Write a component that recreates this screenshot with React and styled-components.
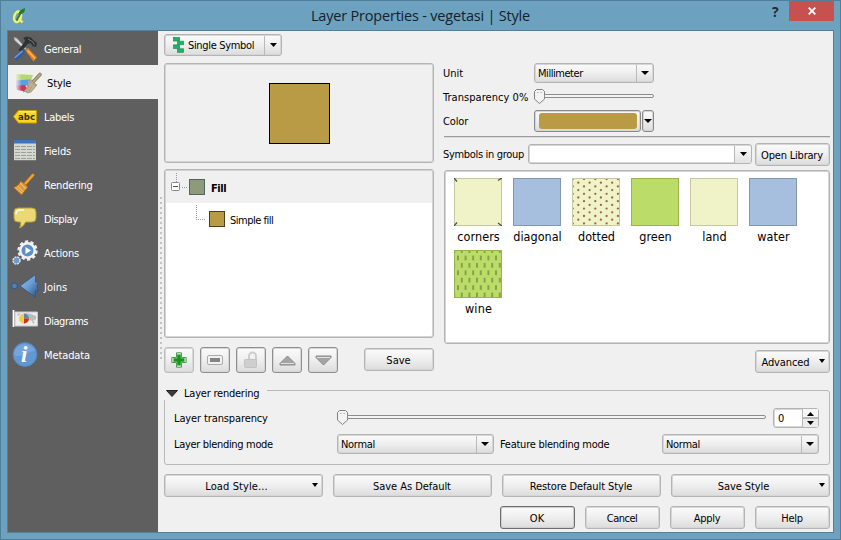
import React from "react";
import styled, { createGlobalStyle, css } from "styled-components";

const Global = createGlobalStyle`
  * { box-sizing: border-box; }
  body { margin: 0; overflow: hidden; }
  svg { display: block; flex: none; }
`;

const face = css`
  border: 1px solid #b4b4b4;
  border-radius: 3px;
  box-shadow: inset 0 0 0 1px #d6d6d6;
  background: linear-gradient(#fbfbfb, #f0f0f0 45%, #dcdcdc);
`;

const Window = styled.div`
  width: 841px;
  height: 540px;
  display: flex;
  flex-direction: column;
  background: #6ca2bf;
  border: 1px solid #4f7f99;
  padding: 0 6px 6px;
  font: 11px/14px "DejaVu Sans Condensed", "DejaVu Sans", sans-serif;
  font-stretch: condensed;
  color: #000;
`;

const TitleBar = styled.header`
  height: 29px;
  flex: none;
  display: grid;
  grid-template-columns: 60px 1fr 60px;
  align-items: center;
  padding-left: 4px;
`;

const Title = styled.h1`
  margin: 0 4px 0 0;
  text-align: center;
  font: 14.5px/20px "Open Sans", sans-serif;
  letter-spacing: -0.2px;
  color: #14212a;
`;

const WindowButtons = styled.div`
  display: flex;
  align-self: start;
  justify-content: space-between;
  margin-left: -2px;
`;

const HelpMark = styled.span`
  font: bold 14px/22px "Open Sans", sans-serif;
  color: #1e2b33;
`;

const CloseButton = styled.button`
  width: 45px;
  height: 20px;
  padding: 0;
  border: 0;
  background: #c75050;
  display: grid;
  place-items: center;
`;

const Client = styled.div`
  flex: 1;
  min-height: 0;
  display: flex;
  background: #f0f0f0;
  border: 1px solid #557f99;
`;

const Sidebar = styled.nav`
  width: 150px;
  flex: none;
  background: #5f5f5f;
`;

const NavItem = styled.div`
  height: 34px;
  display: flex;
  align-items: center;
  padding-left: 4px;
  gap: ${(p) => (p.$active ? 5 : 6)}px;
  padding-top: 1px;
  color: ${(p) => (p.$active ? "#000" : "#fff")};
  background: ${(p) => (p.$active ? "#f0f0f0" : "transparent")};
`;

const Text = styled.span`
  display: block;
  padding-top: 2px;
  white-space: nowrap;
  letter-spacing: ${(p) => p.$ls || 0}px;
  font-weight: ${(p) => (p.$bold ? 700 : 400)};
`;

const Splitter = styled.div`
  width: 6px;
  flex: none;
  display: flex;
  justify-content: center;
  padding-top: 166px;
`;

const Main = styled.main`
  flex: 1;
  padding: 3px 3px 0 0;
`;

const Columns = styled.div`
  display: grid;
  grid-template-columns: 270px 387px;
  gap: 9px;
  margin-top: 7px;
`;

const Frame = styled.div`
  border: 1px solid #b4b4b4;
  box-shadow: inset 0 0 0 1px #d4d4d4;
  border-radius: 3px;
  background: ${(p) => (p.$white ? "#fff" : "#f0f0f0")};
  height: ${(p) => p.$h}px;
`;

const Preview = styled(Frame)`
  display: grid;
  place-items: center;
`;

const Swatch = styled.div`
  width: ${(p) => p.$size}px;
  height: ${(p) => p.$size}px;
  background: ${(p) => p.$fill};
  border: 1px solid ${(p) => p.$edge};
`;

const Tree = styled(Frame)`
  margin-top: 6px;
  padding: 1px;
`;

const TreeRow = styled.div`
  height: 32px;
  display: flex;
  align-items: center;
  padding-left: ${(p) => p.$indent}px;
  background: ${(p) => (p.$root ? "#f0f0f0" : "transparent")};
`;

const TreeText = styled(Text)`
  margin-left: ${(p) => (p.$bold ? 6 : 5)}px;
  padding-top: 3px;
`;

const ToolRow = styled.div`
  display: flex;
  gap: 6px;
  margin-top: 9px;
`;

const ToolButton = styled.button`
  ${face}
  width: 30px;
  height: 26px;
  padding: 0;
  display: grid;
  place-items: center;
  border-color: ${(p) => (p.$soft ? "#bdbdbd" : "#8f8f8f")};
`;

const Button = styled.button`
  ${face}
  width: ${(p) => p.$w}px;
  height: 23px;
  padding: ${(p) => (p.$menu ? "0 18px 0 4px" : "0 1px 0 0")};
  display: flex;
  align-items: center;
  justify-content: center;
  position: relative;
  font: inherit;
  font-stretch: condensed;
  color: #000;
  margin: ${(p) => p.$m || 0};
  ${(p) => p.$primary && css`border-color: #6e6e6e; box-shadow: inset 0 0 0 1px #cfcfcf;`}
`;

const MenuArrow = styled.span`
  position: absolute;
  right: 4px;
  top: 8px;
`;

const SplitButton = styled.div`
  ${face}
  width: 118px;
  height: 22px;
  display: flex;
  align-items: center;
  padding-left: 8px;
  gap: 4px;
`;

const Combo = styled.div`
  ${face}
  width: ${(p) => p.$w}px;
  height: 20px;
  display: flex;
  align-items: center;
  padding-left: 3px;
  ${(p) => p.$editable && css`background: linear-gradient(#fff, #fff);`}
`;

const Drop = styled.span`
  width: 17px;
  height: calc(100% - 1px);
  margin-left: auto;
  border-left: 1px solid #b9b9b9;
  display: grid;
  place-items: center;
  border-radius: 0 2px 2px 0;
  ${(p) => p.$raised && css`background: linear-gradient(#fbfbfb, #e2e2e2);`}
`;

const FormRow = styled.div`
  height: ${(p) => p.$h}px;
  display: grid;
  grid-template-columns: 91px 120px;
  align-items: center;
`;

const Slider = styled.div`
  width: ${(p) => p.$w}px;
  height: 16px;
  display: flex;
  align-items: flex-start;
`;

const Track = styled.div`
  flex: 1;
  height: 4px;
  margin: 5px 0 0 -1px;
  border: 1px solid #8c8c8c;
  border-radius: 0 2px 2px 0;
  background: #f4f4f4;
`;

const ColorRow = styled.div`
  display: flex;
  gap: 1px;
`;

const ColorButton = styled.div`
  ${face}
  border-color: #8a8a8a;
  width: 107px;
  height: 22px;
  padding: 2px 3px 2px 4px;
`;

const ColorFill = styled.div`
  height: 16px;
  border-radius: 3px;
  background: #b99a45;
`;

const ColorDrop = styled.div`
  ${face}
  border-color: #8a8a8a;
  width: 12px;
  height: 22px;
  display: grid;
  place-items: center;
`;

const Rule = styled.hr`
  margin: 4px 0 5px 1px;
  border: 0;
  height: 2px;
  background: linear-gradient(#9c9c9c 50%, #dcdcdc 50%);
`;

const GroupRow = styled.div`
  display: grid;
  grid-template-columns: 85px 227px 75px;
  align-items: start;
  > span { padding-top: 5px; }
  > div { margin-top: 1px; }
`;

const SymbolList = styled(Frame)`
  margin: 4px 0 0 1px;
  padding: 7px 0 0 3px;
  display: grid;
  grid-template-columns: repeat(6, 59px);
  grid-auto-rows: 72px;
  align-content: start;
`;

const Symbol = styled.div`
  display: flex;
  flex-direction: column;
  align-items: center;
  font-size: 12.5px;
  line-height: 18px;
  > span { padding-left: 2px; }
`;

const Group = styled.fieldset`
  margin: 8px 0 0;
  padding: 0;
  min-width: 0;
  height: 84px;
  border: 1px solid #b8b8b8;
  border-radius: 3px;
`;

const Legend = styled.legend`
  height: 19px;
  margin-left: -1px;
  padding: 5px 8px 0 2px;
  display: flex;
  align-items: center;
  gap: 6px;
  background: #f0f0f0;
`;

const GroupLine = styled.div`
  display: grid;
  align-items: center;
  padding: ${(p) => p.$top || 0}px 0 0 9px;
  height: ${(p) => p.$h}px;
  grid-template-columns: ${(p) => p.$cols};
`;

const Spin = styled.div`
  width: 46px;
  height: 20px;
  ${face}
  background: #fff;
  display: flex;
  align-items: center;
  padding-left: 4px;
`;

const SpinArrows = styled.div`
  margin-left: auto;
  width: 16px;
  height: 18px;
  border-left: 1px solid #b9b9b9;
  display: grid;
  grid-template-rows: 1fr 1fr;
  place-items: center;
  background: linear-gradient(#f8f8f8 0 47%, #b9b9b9 47% 53%, #ececec 53%);
`;

const Actions = styled.div`
  display: flex;
  justify-content: flex-end;
  gap: 10px;
  margin-top: 9px;
`;

const Down = ({ w = 8, h = 4 }) => (
  <svg width={w} height={h} viewBox="0 0 9 5" preserveAspectRatio="none"><path d="M0 0h9L4.500 5z" fill="#000" /></svg>
);
const Up = () => (
  <svg width="7" height="4" viewBox="0 0 9 5"><path d="M0 5h9L4.500 0z" fill="#000" /></svg>
);

const Thumb = () => (
  <svg width="11" height="15" viewBox="0 0 11 15">
    <path d="M2.500.500h6l2 2v7.600L5.500 14.500.500 10.100V2.500z" fill="#f3f3f3" stroke="#808080" />
    <path d="M3 3.500h1.500M6.500 3.500H8" stroke="#b0b0b0" />
  </svg>
);

const QgisLogo = () => (
  <svg width="15" height="18" viewBox="-1 0 15 18">
    <ellipse cx="5.500" cy="10" rx="3.300" ry="5.300" fill="none" stroke="#f2f06a" strokeWidth="2.600" transform="rotate(15 6 10)" />
    <path d="M6.500 11l4 4.500" stroke="#f2f06a" strokeWidth="2.400" />
    <path d="M4.500 13.500L10 4" stroke="#2c7b2a" strokeWidth="1.500" />
    <path d="M6.500 7.500C7 4 8.500 3 13 1c0 4-1.500 6-6.500 6.500z" fill="#247a2b" />
  </svg>
);

const Icons = {
  General: (
    <svg width="26" height="26" viewBox="0 0 26 26">
      <path d="M2 1.500l3 1 9 10-1 1L3 4.500z" fill="#d9d9d9" stroke="#aaa" strokeWidth=".8" />
      <path d="M11 2c4-2.500 9-1 10 2l4 3-1 4-3.500-1-2-3-3 1-6 8-3-2 6-8c1-2 0-3-1.500-4z" fill="#2f3234" />
      <path d="M16 3l5 3 1.500 3" stroke="#777" fill="none" />
      <path d="M11.500 12.500l2.500 2.500-9 10-4-3.500z" fill="#2f5f9e" />
      <path d="M10.500 15l-8 7" stroke="#7ba3d3" strokeWidth="1.200" />
      <path d="M13 14l3-2 9 9.500-3.500 4z" fill="#ee7d14" />
      <path d="M15.500 14.500l7.500 8" stroke="#ffc06a" strokeWidth="1.200" />
    </svg>
  ),
  Style: (
    <svg width="30" height="26" viewBox="0 0 30 26">
      <defs>
        <linearGradient id="fade" x1="0" x2="1"><stop offset="0" stopColor="#f0f0f0" /><stop offset=".35" stopColor="#f0f0f0" stopOpacity="0" /></linearGradient>
      </defs>
      <path d="M4 4l17 1-2 6H4z" fill="#b8d672" />
      <path d="M4 10.500l13-1-1 6-12 1z" fill="#5e9de0" />
      <path d="M4 16l9-1 4 7-12-2z" fill="#c8395d" />
      <path d="M3 3h19v20H3z" fill="url(#fade)" />
      <path d="M28 4.500l-7 7.500" stroke="#8d8467" strokeWidth="3.600" strokeLinecap="round" />
      <path d="M28 4.500l-7 7.500" stroke="#b5ab8d" strokeWidth="1.800" strokeLinecap="round" />
      <path d="M18 9.500l7 5.500-6 7-4 1-1-2-3 1c4-3 5-7 7-12.500z" fill="#bdb192" stroke="#938a6c" strokeWidth=".7" />
      <path d="M18 11.500l6 4.500M17 15l-2 5M20 16l-3 5" stroke="#a2987a" strokeWidth=".8" />
    </svg>
  ),
  Labels: (
    <svg width="26" height="26" viewBox="0 0 26 26">
      <path d="M1.500 12.500L6.500 6.500h18v12.500h-18z" fill="#f7d629" stroke="#c79c08" />
      <path d="M7 7.800h16.500" stroke="#fff08a" />
      <text x="6" y="15.800" fontFamily="DejaVu Sans" fontWeight="700" fontSize="9" textLength="17" lengthAdjust="spacingAndGlyphs" fill="#33301c">abc</text>
    </svg>
  ),
  Fields: (
    <svg width="26" height="26" viewBox="0 0 26 26">
      <path d="M2 2h22v20H2z" fill="#d4d7cf" />
      <path d="M2 2h22v3.500H2z" fill="#3f73bd" />
      <path d="M3 8.500h20M3 11.500h20M3 14.500h20M3 17.500h20M3 20.500h20" stroke="#9da199" strokeDasharray="5 1" />
      <path d="M2 22.500h22" stroke="#777a74" />
    </svg>
  ),
  Rendering: (
    <svg width="26" height="26" viewBox="0 0 26 26">
      <path d="M21 3l-8 9" stroke="#b56d12" strokeWidth="3.400" strokeLinecap="round" />
      <path d="M21 3l-8 9" stroke="#eba544" strokeWidth="2" strokeLinecap="round" />
      <path d="M9 9l7 6-6.500 8L1.500 15.500c3-1 5.500-3 7.500-6.500z" fill="#dd9a3e" stroke="#a8650f" strokeWidth=".8" />
      <path d="M8 11l6 6M5.500 14l6 6M3.500 15.500l7 6" stroke="#f5c880" strokeWidth=".9" />
    </svg>
  ),
  Display: (
    <svg width="26" height="26" viewBox="0 0 26 26">
      <path d="M6 2h14q4 0 4 4v6q0 4-4 4h-6.500c-1 3-3.500 5-6 6 1-2 1.500-4 1-6H6q-4 0-4-4V6q0-4 4-4z" fill="#ebd976" stroke="#b5a135" />
      <path d="M4 8.500Q4 4 8 4h4" stroke="#fffbe0" fill="none" strokeWidth="1.500" />
    </svg>
  ),
  Actions: (
    <svg width="26" height="26" viewBox="0 0 26 26">
      <circle cx="15.500" cy="10.500" r="9" fill="none" stroke="#eee" strokeWidth="2.300" strokeDasharray="3.300 2.350" />
      <circle cx="15.500" cy="10.500" r="7.200" fill="#5b8fce" stroke="#f3f3f3" strokeWidth="2.400" />
      <path d="M13.500 7l5.500 3.500-5.500 3.500z" fill="#fff" />
      <circle cx="4.500" cy="20.500" r="3.500" fill="#6c9bd2" stroke="#ddd" strokeWidth="1.500" strokeDasharray="2 .8" />
    </svg>
  ),
  Joins: (
    <svg width="26" height="26" viewBox="0 0 26 26" overflow="visible">
      <defs><linearGradient id="join" x1="0" y1="0" x2="1" y2="1"><stop offset="0" stopColor="#9cc2ea" /><stop offset=".5" stopColor="#6a9bd0" /><stop offset="1" stopColor="#1f4885" /></linearGradient></defs>
      <circle cx="2.500" cy="12" r="2.900" fill="#4f82bd" stroke="#2c568c" />
      <path d="M8 12L23.500.500v7.500h3l-1.500 4 1.500 5h-3v6.500z" fill="url(#join)" stroke="#2d568d" strokeWidth=".8" />
    </svg>
  ),
  Diagrams: (
    <svg width="26" height="26" viewBox="0 0 26 26">
      <path d="M3 4h22.500v14H3z" fill="#ededed" stroke="#c9c9c9" />
      <path d="M1.500 2v17" stroke="#fff" strokeWidth="1.800" />
      <path d="M14 5l5 1 5 2v3l-3 2-4-1zM5 6l4-1-3 3zM20 13l3 1-2 2z" fill="#bcbcbc" />
      <circle cx="12" cy="10.500" r="5" fill="#f0cf4d" />
      <path d="M12 10.500V5.500a5 5 0 0 1 5 5z" fill="#5487c4" />
      <path d="M12 10.500h5a5 5 0 0 1-5 5z" fill="#d92b25" />
    </svg>
  ),
  Metadata: (
    <svg width="26" height="26" viewBox="0 0 26 26">
      <circle cx="13" cy="12.500" r="12" fill="#6397d2" stroke="#4f82bd" strokeWidth=".8" />
      <path d="M2 11a11 11 0 0 1 21-2c-6 0-12 6-20 5z" fill="#7dabdf" opacity=".7" />
      <text x="9" y="20" fontFamily="Liberation Serif" fontStyle="italic" fontWeight="700" fontSize="23" fill="#fff">i</text>
    </svg>
  ),
};

const nav = [
  ["General", -0.25], ["Style", -0.1], ["Labels", -0.3], ["Fields", -0.15], ["Rendering", -0.2],
  ["Display", -0.4], ["Actions", -0.15], ["Joins", 0], ["Diagrams", -0.45], ["Metadata", -0.1],
];

const SingleIcon = () => (
  <svg width="11" height="16" viewBox="0 0 11 16">
    <g fill="#12b862" stroke="#3f8a5f" strokeWidth=".8">
      <rect x=".5" y=".5" width="6" height="3.500" />
      <rect x="4.500" y="4.200" width="6" height="3.500" />
      <rect x=".5" y="7.900" width="6" height="3.500" />
      <rect x="4.500" y="11.800" width="6" height="3.500" />
    </g>
  </svg>
);

function SymbolArt({ kind, fill, edge }) {
  const marks = [];
  if (kind === "dotted")
    for (let r = 0; r < 14; r++)
      for (let c = 0; c < 5; c++)
        marks.push(
          <circle key={r + "-" + c} fill="#94694c" cx={(r % 2 ? 5.300 : 11) + c * 11.300 - 10.300} cy={3.700 * r + 1} r="1.150" />
        );
  if (kind === "wine")
    for (let r = 0; r < 7; r++)
      for (let c = 0; c < 7; c++)
        marks.push(
          <rect key={r + "-" + c} fill="#84a449" x={(r % 2 ? 3 : -0.800) + c * 7.600} y={r * 7.400 - 1.800} width="2" height="4.700" />
        );
  return (
    <svg width="48" height="48" viewBox="0 0 48 48">
      <rect width="48" height="48" fill={fill} />
      {marks}
      <rect x=".5" y=".5" width="47" height="47" fill="none" stroke={edge} />
      {kind === "corners" && (
        <path d="M0 0l3 3.500M48 0l-4 2.500M0 48l3-3.500M48 48l-4-3" stroke="#4c5142" strokeWidth="1.300" />
      )}
    </svg>
  );
}

const symbols = [
  ["corners", "#f0f3c8", "#c6c99f", 0.1],
  ["diagonal", "#a7bfde", "#8198b0", 0],
  ["dotted", "#f0f3c8", "#c6c99f", 0],
  ["green", "#bbdc69", "#97b44e", 0],
  ["land", "#f0f3c8", "#c6c99f", 0],
  ["water", "#a7bfde", "#8198b0", 0.1],
  ["wine", "#bbdc69", "#97b44e", 0.2],
];

export default function App() {
  return (
    <Window>
      <Global />
      <TitleBar>
        <QgisLogo />
        <Title>Layer Properties - vegetasi | Style</Title>
        <WindowButtons>
          <HelpMark>?</HelpMark>
          <CloseButton>
            <svg width="8" height="8" viewBox="0 0 8 8"><path d="M.7.7l6.600 6.600M7.300.7L.7 7.300" stroke="#fff" strokeWidth="1.800" /></svg>
          </CloseButton>
        </WindowButtons>
      </TitleBar>
      <Client>
        <Sidebar>
          {nav.map(([name, ls]) => (
            <NavItem key={name} $active={name === "Style"}>
              {Icons[name]}
              <Text $ls={ls}>{name}</Text>
            </NavItem>
          ))}
        </Sidebar>
        <Splitter>
          <svg width="3" height="166" viewBox="0 0 3 166">
            {Array.from({ length: 33 }, (_, i) => <path key={i} d={`M0 ${i * 5 + 1}h2`} stroke="#c2c2c2" strokeWidth="2" />)}
          </svg>
        </Splitter>
        <Main>
          <SplitButton>
            <SingleIcon />
            <Text $ls={-0.33}>Single Symbol</Text>
            <Drop><Down w={7} h={4} /></Drop>
          </SplitButton>
          <Columns>
            <div>
              <Preview $h={100}><Swatch $size={61} $fill="#b99a45" $edge="#000" /></Preview>
              <Tree $white $h={169}>
                <TreeRow $root $indent={5}>
                  <svg width="18" height="32" viewBox="0 0 18 32">
                    <path d="M5.500 2v9M11 16.500h5" stroke="#999" strokeDasharray="1 1" />
                    <rect x=".5" y="11.500" width="8" height="8" rx="1" fill="#fff" stroke="#8a8a8a" />
                    <path d="M2 15.500h5" stroke="#555" />
                  </svg>
                  <Swatch $size={16} $fill="#8f9a7a" $edge="#4f6463" />
                  <TreeText $bold $ls={-0.4}>Fill</TreeText>
                </TreeRow>
                <TreeRow $indent={29}>
                  <svg width="14" height="32" viewBox="0 0 14 32">
                    <path d="M1.500 2v14M1 16.500h10" stroke="#999" fill="none" strokeDasharray="1 1" />
                  </svg>
                  <Swatch $size={16} $fill="#b99a45" $edge="#4d3f19" />
                  <TreeText $ls={-0.5}>Simple fill</TreeText>
                </TreeRow>
              </Tree>
              <ToolRow>
                <ToolButton $soft>
                  <svg width="16" height="16" viewBox="0 0 16 16"><path d="M5.500.8h5v4.700h4.700v5h-4.700v4.700h-5v-4.700H.8v-5h4.700z" fill="#e4f2e4" stroke="#4f9a53" /><path d="M6.200 2.500h3.600v3.700h3.700v3.600H9.800v3.700H6.200V9.800H2.500V6.200h3.700z" fill="#18961c" /></svg>
                </ToolButton>
                <ToolButton>
                  <svg width="16" height="10" viewBox="0 0 16 10"><rect x=".5" y=".5" width="15" height="9" rx="1.500" fill="#f2f2f2" stroke="#ababab" /><rect x="3" y="3" width="10" height="4" fill="#858585" /></svg>
                </ToolButton>
                <ToolButton>
                  <svg width="16" height="18" viewBox="0 0 16 18"><path d="M6 8V5a3.500 3.500 0 0 1 7 0v4" fill="none" stroke="#cdcdcd" strokeWidth="2" /><rect x="1.500" y="8.500" width="12" height="8" rx="1" fill="#cfcfcf" stroke="#c2c2c2" /></svg>
                </ToolButton>
                <ToolButton>
                  <svg width="17" height="11" viewBox="0 0 17 11"><path d="M8.500 1L16 8.500v1.500H1V8.500z" fill="#a4a4a4" stroke="#8a8a8a" /><path d="M2 8.500h13" stroke="#e2e2e2" /></svg>
                </ToolButton>
                <ToolButton>
                  <svg width="17" height="11" viewBox="0 0 17 11"><path d="M8.500 10L1 2.500V1h15v1.500z" fill="#a4a4a4" stroke="#8a8a8a" /><path d="M2 2.500h13" stroke="#e2e2e2" /></svg>
                </ToolButton>
                <Button $w={70} $m="1px 0 0 20px"><Text>Save</Text></Button>
              </ToolRow>
            </div>
            <div>
              <FormRow $h={20}>
                <Text>Unit</Text>
                <Combo $w={120}><Text $ls={-0.45}>Millimeter</Text><Drop><Down /></Drop></Combo>
              </FormRow>
              <FormRow $h={27}>
                <Text $ls={0.05}>Transparency 0%</Text>
                <Slider $w={120}><Thumb /><Track /></Slider>
              </FormRow>
              <FormRow $h={22}>
                <Text $ls={-0.15}>Color</Text>
                <ColorRow>
                  <ColorButton><ColorFill /></ColorButton>
                  <ColorDrop><Down /></ColorDrop>
                </ColorRow>
              </FormRow>
              <Rule />
              <GroupRow>
                <Text $ls={-0.32}>Symbols in group</Text>
                <Combo $w={224} $editable><Drop $raised><Down w={7} h={4} /></Drop></Combo>
                <Button $w={75}><Text $ls={-0.2}>Open Library</Text></Button>
              </GroupRow>
              <SymbolList $white $h={174}>
                {symbols.map(([name, fill, edge, ls]) => (
                  <Symbol key={name}>
                    <SymbolArt kind={name} fill={fill} edge={edge} />
                    <Text $ls={ls}>{name}</Text>
                  </Symbol>
                ))}
              </SymbolList>
              <Button $w={75} $menu $m="6px 0 0 312px"><Text $ls={-0.1}>Advanced</Text><MenuArrow><Down w={6} h={4} /></MenuArrow></Button>
            </div>
          </Columns>
          <Group>
            <Legend>
              <svg width="12" height="7" viewBox="0 0 12 7"><path d="M.5.500h11L6 6.500z" fill="#3c3c3c" stroke="#222" /></svg>
              <Text $ls={-0.22}>Layer rendering</Text>
            </Legend>
            <GroupLine $h={34} $top={2} $cols="163px 436px 46px">
              <Text $ls={-0.12}>Layer transparency</Text>
              <Slider $w={429}><Thumb /><Track /></Slider>
              <Spin><Text>0</Text><SpinArrows><Up /><Down w={7} h={4} /></SpinArrows></Spin>
            </GroupLine>
            <GroupLine $h={20} $cols="163px 163px 162px 157px">
              <Text $ls={-0.32}>Layer blending mode</Text>
              <Combo $w={157}><Text $ls={-0.3}>Normal</Text><Drop><Down /></Drop></Combo>
              <Text $ls={-0.25}>Feature blending mode</Text>
              <Combo $w={157}><Text $ls={-0.3}>Normal</Text><Drop><Down /></Drop></Combo>
            </GroupLine>
          </Group>
          <Actions>
            <Button $w={159} $menu><Text $ls={0.1}>Load Style...</Text><MenuArrow><Down w={6} h={4} /></MenuArrow></Button>
            <Button $w={159}><Text $ls={-0.05}>Save As Default</Text></Button>
            <Button $w={159}><Text $ls={-0.1}>Restore Default Style</Text></Button>
            <Button $w={159} $menu><Text $ls={-0.1}>Save Style</Text><MenuArrow><Down w={6} h={4} /></MenuArrow></Button>
          </Actions>
          <Actions>
            <Button $w={75} $primary><Text>OK</Text></Button>
            <Button $w={75}><Text $ls={-0.5}>Cancel</Text></Button>
            <Button $w={75}><Text $ls={-0.25}>Apply</Text></Button>
            <Button $w={75}><Text $ls={-0.3}>Help</Text></Button>
          </Actions>
        </Main>
      </Client>
    </Window>
  );
}
